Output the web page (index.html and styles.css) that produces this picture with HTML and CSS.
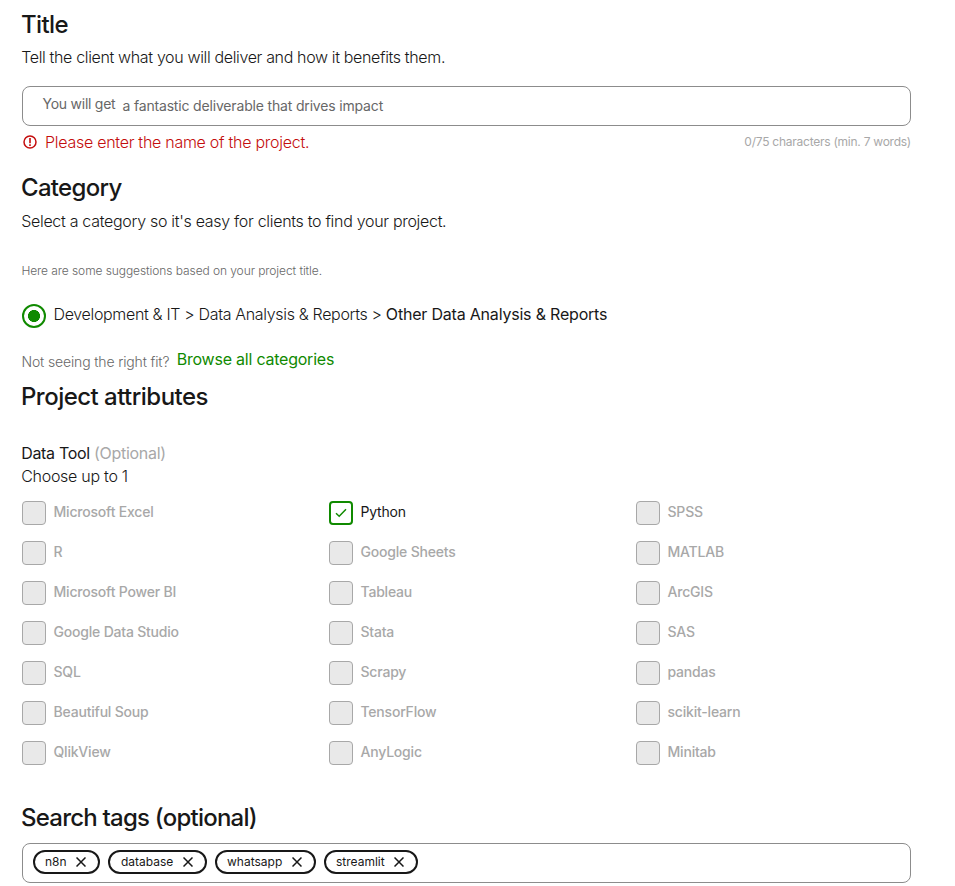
FILE: index.html
```html
<!DOCTYPE html>
<html lang="en">
<head>
<meta charset="utf-8">
<title>Project overview</title>
<link rel="stylesheet" href="styles.css">
</head>
<body>
<main class="form">
  <h2 class="heading heading-title">Title</h2>
  <p class="lead">Tell the client what you will deliver and how it benefits them.</p>
  <div class="field title-field">
    <span class="prefix">You will get</span>
    <span class="placeholder">a fantastic deliverable that drives impact</span>
  </div>
  <div class="field-note">
    <svg class="error-icon" viewBox="0 0 14 14" width="14" height="14"><circle cx="7" cy="7" r="6" fill="none" stroke="currentColor" stroke-width="1.5"/><path d="M7 3v5.200M7 9.300v1.700" fill="none" stroke="currentColor" stroke-width="1.6"/></svg>
    <span class="error">Please enter the name of the project.</span>
    <span class="counter">0/75 characters (min. 7 words)</span>
  </div>

  <h2 class="heading heading-category">Category</h2>
  <p class="lead lead-category">Select a category so it's easy for clients to find your project.</p>
  <p class="hint">Here are some suggestions based on your project title.</p>
  <div class="suggestion">
    <span class="radio"></span>
    <span class="path">Development &amp; IT &gt; Data Analysis &amp; Reports &gt; <b class="leaf">Other Data Analysis &amp; Reports</b></span>
  </div>
  <div class="browse">
    <span class="question">Not seeing the right fit?</span>
    <a class="link">Browse all categories</a>
  </div>

  <h2 class="heading heading-attributes">Project attributes</h2>
  <p class="group-label">Data Tool <span class="optional">(Optional)</span></p>
  <p class="group-help">Choose up to 1</p>
  <div class="options">
    <div class="option"><span class="box"></span>Microsoft Excel</div>
    <div class="option checked"><span class="box"><svg viewBox="0 0 12 10" width="12" height="10"><path d="M1 5.3l3.2 3L11 1.3" fill="none" stroke="currentColor" stroke-width="1.5"/></svg></span>Python</div>
    <div class="option"><span class="box"></span>SPSS</div>
    <div class="option"><span class="box"></span>R</div>
    <div class="option"><span class="box"></span>Google Sheets</div>
    <div class="option"><span class="box"></span>MATLAB</div>
    <div class="option"><span class="box"></span>Microsoft Power BI</div>
    <div class="option"><span class="box"></span>Tableau</div>
    <div class="option"><span class="box"></span>ArcGIS</div>
    <div class="option"><span class="box"></span>Google Data Studio</div>
    <div class="option"><span class="box"></span>Stata</div>
    <div class="option"><span class="box"></span>SAS</div>
    <div class="option"><span class="box"></span>SQL</div>
    <div class="option"><span class="box"></span>Scrapy</div>
    <div class="option"><span class="box"></span>pandas</div>
    <div class="option"><span class="box"></span>Beautiful Soup</div>
    <div class="option"><span class="box"></span>TensorFlow</div>
    <div class="option"><span class="box"></span>scikit-learn</div>
    <div class="option"><span class="box"></span>QlikView</div>
    <div class="option"><span class="box"></span>AnyLogic</div>
    <div class="option"><span class="box"></span>Minitab</div>
  </div>

  <h2 class="heading heading-tags">Search tags (optional)</h2>
  <div class="field tag-field">
    <span class="tag tag-short">n8n<svg viewBox="0 0 10 10" width="10" height="10"><path d="M.5.5l9 9M9.500.5l-9 9" fill="none" stroke="currentColor" stroke-width="1.5"/></svg></span>
    <span class="tag tag-database">database<svg viewBox="0 0 10 10" width="10" height="10"><path d="M.5.5l9 9M9.500.5l-9 9" fill="none" stroke="currentColor" stroke-width="1.5"/></svg></span>
    <span class="tag tag-whatsapp">whatsapp<svg viewBox="0 0 10 10" width="10" height="10"><path d="M.5.5l9 9M9.500.5l-9 9" fill="none" stroke="currentColor" stroke-width="1.5"/></svg></span>
    <span class="tag tag-streamlit">streamlit<svg viewBox="0 0 10 10" width="10" height="10"><path d="M.5.5l9 9M9.500.5l-9 9" fill="none" stroke="currentColor" stroke-width="1.5"/></svg></span>
  </div>
</main>
</body>
</html>
```
FILE: styles.css
```css
* { box-sizing: border-box; }
body {
  margin: 0;
  background: #fff;
  color: #181818;
  font-family: Inter, "Liberation Sans", sans-serif;
  font-size: 16px;
  line-height: 24px;
}
p, h2 { margin: 0; }
.form {
  display: flow-root;
  width: 889px;
  margin-left: 22px;
}

.heading {
  font-size: 24px;
  font-weight: 450;
  line-height: 30px;
  text-indent: -1px;
}
.heading-title { margin-top: 10px; letter-spacing: -0.6px; }
.heading-category { margin-top: 19px; letter-spacing: -0.7px; }
.heading-attributes { margin-top: 9px; letter-spacing: -0.53px; }
.heading-tags { margin-top: 38px; letter-spacing: -0.77px; }

.lead {
  margin-top: 5px;
  font-weight: 300;
  letter-spacing: -0.350px;
  text-indent: -0.8px;
}
.lead-category { margin-top: 6px; letter-spacing: -0.305px; }

.field {
  display: flex;
  height: 40px;
  border: 1px solid #8c8c8c;
  border-radius: 8px;
}
.title-field {
  margin-top: 17px;
  padding-left: 19.5px;
  color: #676767;
  font-size: 14px;
  line-height: 20px;
  gap: 7px;
}
.prefix { margin-top: 7px; letter-spacing: -0.25px; }
.placeholder { margin-top: 9px; letter-spacing: -0.17px; }

.field-note {
  display: flex;
  align-items: flex-start;
  margin-top: 4px;
}
.error-icon { margin: 5px 8px 0 1px; color: #c40d0d; }
.error { color: #c40d0d; font-weight: 300; letter-spacing: -0.27px; }
.counter {
  margin: 3px 0 0 auto;
  color: #a8a8a8;
  font-size: 12px;
  line-height: 18px;
  letter-spacing: -0.25px;
}

.hint {
  margin-top: 29px;
  color: #676767;
  font-size: 12px;
  font-weight: 300;
  line-height: 18px;
  letter-spacing: -0.08px;
  text-indent: -0.6px;
}
.suggestion { display: flex; height: 26px; margin-top: 22px; }
.radio {
  width: 24px;
  height: 24px;
  margin: 2px 7.5px 0 0;
  border: 2px solid #108a00;
  border-radius: 50%;
  background: radial-gradient(circle, #108a00 5.700px, #fff 6.300px);
}
.path { font-weight: 300; letter-spacing: -0.335px; }
.leaf { font-weight: 400; letter-spacing: -0.2px; }

.browse { display: flex; height: 26px; margin-top: 19px; gap: 7.5px; }
.question {
  margin-top: 4px;
  color: #676767;
  font-size: 14px;
  font-weight: 300;
  line-height: 22px;
  letter-spacing: -0.14px;
  text-indent: -0.6px;
}
.link { color: #108a00; font-weight: 440; letter-spacing: -0.23px; }

.group-label {
  margin-top: 30px;
  line-height: 23px;
  letter-spacing: -0.33px;
  text-indent: -0.8px;
}
.optional { color: #a8a8a8; letter-spacing: -0.27px; }
.group-help { font-weight: 300; line-height: 23px; letter-spacing: -0.28px; text-indent: -0.8px; }

.options {
  display: grid;
  grid-template-columns: 307px 307px 1fr;
  grid-auto-rows: 24px;
  row-gap: 16px;
  margin-top: 13px;
}
.option {
  display: flex;
  color: #a8a8a8;
  font-size: 14px;
  font-weight: 450;
  line-height: 22px;
  letter-spacing: -0.2px;
}
.box {
  display: flex;
  align-items: center;
  justify-content: center;
  width: 24px;
  height: 24px;
  margin-right: 7.5px;
  border: 1px solid #a8a8a8;
  border-radius: 4px;
  background: #e9e9e9;
}
.checked { color: #181818; font-weight: 420; }
.checked .box { border: 2px solid #108a00; background: #fff; color: #108a00; }

.tag-field { align-items: flex-start; margin-top: 10px; padding: 6px 10px; gap: 8px; }
.tag {
  display: flex;
  align-items: center;
  justify-content: space-between;
  height: 24px;
  padding: 0 12px 1px 10px;
  border: 2px solid #181818;
  border-radius: 12px;
  font-size: 12px;
  font-weight: 420;
  line-height: 18px;
  letter-spacing: 0;
}
.tag svg { margin-top: 1px; }
.tag-short { width: 67px; }
.tag-database { width: 99px; padding-left: 11px; }
.tag-whatsapp { width: 101px; }
.tag-streamlit { width: 94px; }
```
